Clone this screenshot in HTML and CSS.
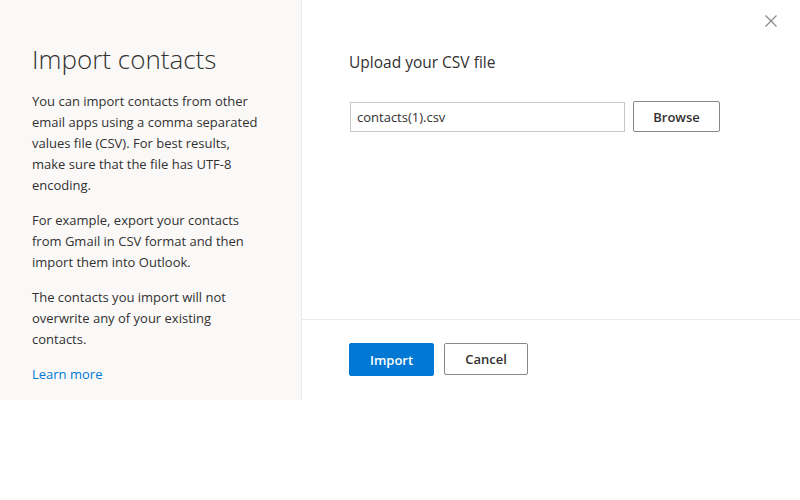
FILE: index.html
```html
<!DOCTYPE html>
<html lang="en">
<head>
<meta charset="utf-8">
<title>Import contacts</title>
<link rel="stylesheet" href="styles.css">
</head>
<body>
<div class="dialog">
  <aside class="side">
    <h1 class="title">Import contacts</h1>
    <p class="para">You can import contacts from other<br>email apps using a comma separated<br>values file (CSV). For best results,<br>make sure that the file has UTF-8<br>encoding.</p>
    <p class="para">For example, export your contacts<br>from Gmail in CSV format and then<br>import them into Outlook.</p>
    <p class="para">The contacts you import will not<br>overwrite any of your existing<br>contacts.</p>
    <a class="link" href="#">Learn more</a>
  </aside>
  <section class="main">
    <button class="close" aria-label="Close">
      <svg width="12" height="12" viewBox="0 0 12 12"><path d="M0.5 0.5 L11.5 11.5 M11.5 0.5 L0.5 11.5" stroke="#8a8886" stroke-width="1.2" fill="none"/></svg>
    </button>
    <div class="main-body">
      <h2 class="subtitle">Upload your CSV file</h2>
      <div class="file-row">
        <div class="file-input">contacts(1).csv</div>
        <button class="btn btn-browse">Browse</button>
      </div>
    </div>
    <div class="footer">
      <button class="btn btn-primary">Import</button>
      <button class="btn btn-cancel">Cancel</button>
    </div>
  </section>
</div>
</body>
</html>
```
FILE: styles.css
```css
html, body {
  margin: 0;
  padding: 0;
  background: #ffffff;
}
body {
  font-family: "Segoe UI", "Open Sans", "Noto Sans", sans-serif;
  color: #323130;
  font-size: 13px;
}
.dialog {
  display: flex;
  width: 800px;
  height: 400px;
}
.side {
  box-sizing: border-box;
  width: 302px;
  background: #faf9f8;
  border-right: 1px solid #edebe9;
  padding: 39px 8px 0 32px;
}
.title {
  margin: 0 0 12px 0;
  font-size: 26px;
  font-weight: 300;
  line-height: 40px;
  color: #323130;
}
.para {
  margin: 0 0 14px 0;
  line-height: 21px;
}
.link {
  color: #0078d4;
  text-decoration: none;
  line-height: 21px;
}
.main {
  position: relative;
  flex: 1;
  display: flex;
  flex-direction: column;
}
.close {
  position: absolute;
  top: 15px;
  right: 23px;
  width: 12px;
  height: 12px;
  padding: 0;
  border: 0;
  background: none;
  display: flex;
}
.main-body {
  box-sizing: border-box;
  height: 320px;
  border-bottom: 1px solid #edebe9;
  padding: 50px 0 0 47px;
}
.subtitle {
  margin: 0 0 27px 0;
  font-size: 15.5px;
  font-weight: 400;
  line-height: 24px;
}
.file-row {
  display: flex;
  align-items: center;
  gap: 8px;
}
.file-input {
  box-sizing: border-box;
  width: 275px;
  height: 30px;
  border: 1px solid #c8c6c4;
  padding: 0 6px;
  line-height: 28px;
  margin-left: 1px;
}
.btn {
  box-sizing: border-box;
  height: 32px;
  padding: 0;
  border: 1px solid #8a8886;
  border-radius: 2px;
  background: #ffffff;
  color: #323130;
  font-family: inherit;
  font-size: 13px;
  font-weight: 600;
}
.btn-browse {
  width: 87px;
  height: 31px;
}
.footer {
  display: flex;
  gap: 10px;
  padding: 23px 0 0 47px;
}
.btn-primary {
  background: #0078d4;
  border-color: #0078d4;
  color: #ffffff;
  width: 85px;
  height: 33px;
}
.btn-cancel {
  width: 84px;
}
```
